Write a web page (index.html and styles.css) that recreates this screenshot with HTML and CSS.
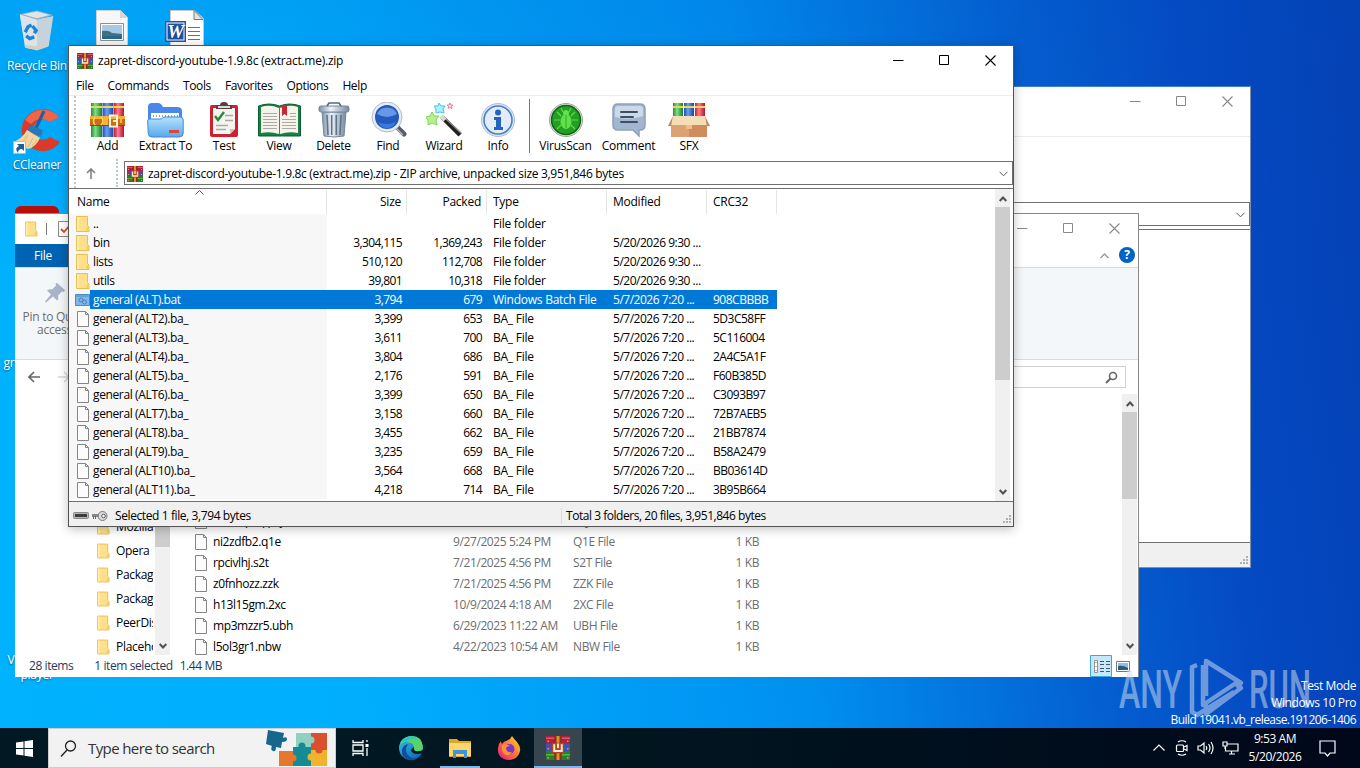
FILE: index.html
```
<!DOCTYPE html>
<html lang="en">
<head>
  <meta charset="UTF-8">
  <title>Desktop</title>
  <link rel="stylesheet" href="styles.css">
</head>
<body>
<svg class="defs">
  <defs>
    <linearGradient id="glass" x1="0" y1="0" x2="0" y2="1"><stop offset="0" stop-color="#b5e2fb"/><stop offset="1" stop-color="#58a9ec"/></linearGradient>
    <linearGradient id="steel" x1="0" y1="0" x2="1" y2="0"><stop offset="0" stop-color="#7c92a8"/><stop offset=".4" stop-color="#eef3f8"/><stop offset="1" stop-color="#7488a0"/></linearGradient>
    <linearGradient id="edge" x1="0" y1="0" x2="1" y2="1"><stop offset="0" stop-color="#35c1f1"/><stop offset="1" stop-color="#0c59a4"/></linearGradient>
    <linearGradient id="fire" x1="1" y1="0" x2="0" y2="1"><stop offset="0" stop-color="#ffe226"/><stop offset=".5" stop-color="#ff7139"/><stop offset="1" stop-color="#e31587"/></linearGradient>
    <linearGradient id="green" x1="0" y1="0" x2="1" y2="0"><stop offset="0" stop-color="#1f8f35"/><stop offset=".4" stop-color="#7be085"/><stop offset="1" stop-color="#1a7a2e"/></linearGradient>
    <linearGradient id="blue" x1="0" y1="0" x2="1" y2="0"><stop offset="0" stop-color="#1d4fb8"/><stop offset=".4" stop-color="#6c9df5"/><stop offset="1" stop-color="#1b439c"/></linearGradient>
    <linearGradient id="red" x1="0" y1="0" x2="1" y2="0"><stop offset="0" stop-color="#c01e3c"/><stop offset=".4" stop-color="#ff7c8b"/><stop offset="1" stop-color="#b0152f"/></linearGradient>
    <symbol id="rar" viewBox="0 0 16 16">
      <path fill="#b01f3c" d="M0 0h16v5H0z"/><path fill="#de5670" d="M0 1h16v1H0z"/>
      <path fill="#3a56b4" d="M0 5h16v5H0z"/><path fill="#6a3f9c" d="M0 6h16v1H0z"/>
      <path fill="#2b7f2c" d="M0 10h16v6H0z"/><path fill="#58b244" d="M0 12h16v1H0z"/>
      <path fill="#8a2f1a" d="M5.500 0h5v16h-5z"/><path fill="#e0912f" d="M7 0h2v16H7z"/>
      <path fill="#b9431f" d="M4 4.500h8v7H4z"/><path fill="none" stroke="#f7ead0" stroke-width="1.300" d="M5.500 5.500v4.500h5V5.500M8 5v3"/>
      <path fill="#d9a13a" d="M1 3h1v1H1zM14 3h1v1h-1zM1 8h1v1H1zM14 8h1v1h-1zM1 14h1v1H1zM14 14h1v1h-1z"/>
    </symbol>
    <symbol id="folder" viewBox="0 0 14 16">
      <path fill="#ffe08a" stroke="#e9c04f" d="M.5 .5h11v9l1.500 1.500v4.500H.5z"/><path fill="#ffebaa" d="M1 1h2v14H1z"/><path fill="#f4cf60" d="M10.500 11h2v4h-2z"/>
    </symbol>
    <symbol id="page" viewBox="0 0 12 16">
      <path fill="#fcfcfc" stroke="#858585" d="M.5 .5h8l3 3v12H.5z"/><path fill="none" stroke="#858585" d="M8.500 .5v3h3"/>
    </symbol>
    <symbol id="bat" viewBox="0 0 15 12">
      <path fill="#7fb8e8" stroke="#4a8cc8" d="M.5 .5h14v11H.5z"/><path fill="#65a3d8" d="M1 1h13v2H1z"/>
      <circle cx="6" cy="6" r="2" fill="none" stroke="#4f83b5"/><circle cx="9.500" cy="8" r="2" fill="none" stroke="#4f83b5"/>
    </symbol>
    <symbol id="up" viewBox="0 0 8 6"><path fill="none" stroke="#505050" stroke-width="2" d="M.7 5 4 1.500 7.300 5"/></symbol>
    <symbol id="down" viewBox="0 0 8 6"><path fill="none" stroke="#505050" stroke-width="2" d="M.7 1 4 4.500 7.300 1"/></symbol>
    <symbol id="min" viewBox="0 0 11 11"><path stroke="currentColor" d="M0 5.500h10.500"/></symbol>
    <symbol id="max" viewBox="0 0 11 11"><path fill="none" stroke="currentColor" d="M.5 .5h9v9h-9z"/></symbol>
    <symbol id="close" viewBox="0 0 11 11"><path stroke="currentColor" stroke-width="1.100" d="M.5 .5l10 10M10.500 .5l-10 10"/></symbol>
    <symbol id="grip" viewBox="0 0 9 9"><path fill="#b0b0b0" d="M6 0h2v2H6zM3 3h2v2H3zM6 3h2v2H6zM0 6h2v2H0zM3 6h2v2H3zM6 6h2v2H6z"/></symbol>
  </defs>
</svg>

<main class="desktop">
  <div class="shortcut recycle">
    <svg width="38" height="43" viewBox="0 0 42 44">
      <path fill="#c7d3dc" d="M2 4l6 37 13 2 13-4 5-33-20 4z"/><path fill="#dde4e9" d="M2 4l6 37 13 2V9z"/><path fill="#9eb0bd" d="M2 4l19-4 18 5-18 5z"/><path fill="#dfe6ea" d="M5 4l16-3 14 4-14 3.500z"/>
      <path fill="#d8cfc4" d="M7 38l14 1 13-2-1 3-12 4-13-3z"/>
      <g fill="none" stroke="#1d84d6" stroke-width="3.800"><path d="M8 24l3-6 4-2"/><path d="M16 17l4 5-2 3"/><path d="M18 29l-5 2-4-3"/></g>
    </svg>
    <span>Recycle Bin</span>
  </div>
  <div class="shortcut picture">
    <svg width="32" height="42" viewBox="0 0 32 42"><path fill="#f7f7f7" stroke="#d0d0d0" d="M.5 .5h24l7 7v34H.5z"/><path fill="#d5d5d5" d="M24 0v8h8z"/><path fill="#fff" stroke="#8a8f95" d="M4.500 13.500h23v17h-23z"/><path fill="#a8c9e6" d="M6 15h20v14H6z"/><path fill="#41717a" d="M6 21q7-1 10 2l10 1v2H6z"/><path fill="#2d668e" d="M6 26h20v3H6z"/></svg>
  </div>
  <div class="shortcut word">
    <svg width="39" height="42" viewBox="0 0 39 42"><path fill="#fff" stroke="#c9c9c9" d="M5.500 .5h24l9 8v34h-33z"/><path fill="#e4e4e4" stroke="#777" d="M29 .5v9h9z"/><path stroke="#3c78c3" d="M23 17.500h12M23 21.500h12M23 25.500h12M23 29.500h12"/><path fill="#1d55a8" d="M0 11h21v21H0z"/><path fill="#fff" d="M1.500 12.500h18v18h-18z"/><path fill="#1d55a8" d="M2.500 13.500h16v16h-16z"/><text x="10.500" y="28" class="word-letter">W</text></svg>
  </div>
  <div class="shortcut ccleaner">
    <svg width="48" height="46" viewBox="0 0 48 46">
      <path fill="#d93a2a" d="M46 9A21 21 0 1 0 47 34L37 29A10 10 0 1 1 37 14z"/><path fill="#f0644a" d="M46 9A21 21 0 0 0 12 12l6 4q9-9 19-2z"/>
      <path stroke="#1f5f9f" stroke-width="3" d="M31 3L23 20"/><path fill="#2c77b8" d="M17 17l13 5-2 7-14-6z"/><path fill="#f3d5a4" d="M14 22l13 8q-4 9-12 11L0 34q9-3 14-12z"/><path stroke="#dcb47a" d="M15 27L8 36M20 30l-5 9M24 32l-5 6"/>
      <path fill="#fff" stroke="#bbb" d="M.5 33.500h12v12H.5z"/><path fill="#235c98" d="M4 36h7v7l-2-2q-4 0-4 4-4-5 1-7z"/>
    </svg>
    <span>CCleaner</span>
  </div>
  <div class="red-app"></div>
  <div class="shortcut cut-gr"><span>gr</span></div>
  <div class="shortcut cut-vlc"><span>V</span></div>
  <div class="shortcut cut-player"><span>player</span></div>

  <section class="window winrar back">
    <div class="titlebar"><span class="title"></span>
      <div class="buttons"><svg><use href="#min"/></svg><svg><use href="#max"/></svg><svg><use href="#close"/></svg></div></div>
    <div class="menu"></div>
    <div class="toolbar"></div>
    <div class="address-row"><div class="address"><svg class="drop" viewBox="0 0 9 6"><path d="M.5 .8l4 4 4-4"/></svg></div></div>
    <div class="list">
      <div class="scrollbar"><svg><use href="#up"/></svg><div class="thumb"></div><svg class="end"><use href="#down"/></svg></div>
    </div>
    <div class="status"><svg class="grip"><use href="#grip"/></svg></div>
  </section>

  <section class="window explorer">
    <div class="titlebar">
      <svg class="small-folder"><use href="#folder"/></svg><i class="bar"></i>
      <svg width="16" height="16" viewBox="0 0 16 16"><path fill="#fff" stroke="#8a8a8a" d="M.5 .5h12v15H.5z"/><path fill="none" stroke="#c8511c" stroke-width="1.800" d="M3 8l3 3 6-7"/></svg>
      <div class="buttons"><svg><use href="#min"/></svg><svg><use href="#max"/></svg><svg><use href="#close"/></svg></div>
    </div>
    <div class="tabs"><span class="file-tab">File</span>
      <svg class="fold" viewBox="0 0 9 6"><path d="M.5 5l4-4 4 4"/></svg><b class="help">?</b></div>
    <div class="ribbon">
      <div class="pin">
        <svg width="22" height="22" viewBox="0 0 22 22"><path fill="#a9b3c9" d="M13 1l8 7-1 2-2-.5-4 4q1 4-1 5l-4-4-7 6-1-1 6-7-4-4q2-2 5-1l4-4-.500-2z"/></svg>
        <span>Pin to Quick<br>access</span>
      </div>
    </div>
    <div class="nav">
      <svg width="42" height="12" viewBox="0 0 42 12"><path fill="none" stroke="#666" stroke-width="1.600" d="M12 6H1M6 1L1 6l5 5"/><path fill="none" stroke="#d5d5d5" stroke-width="1.400" d="M30 6h11M36 1l5 5-5 5"/></svg>
      <div class="search"><svg width="13" height="13" viewBox="0 0 13 13"><circle cx="8" cy="5" r="3.500" fill="none" stroke="#666" stroke-width="1.600"/><path stroke="#666" stroke-width="2" d="M5.500 7.500L1 12"/></svg></div>
    </div>
    <div class="panes">
      <div class="tree" id="tree"></div>
      <div class="scrollbar tree-scroll"><div class="thumb"></div><svg class="end"><use href="#down"/></svg></div>
      <div class="files" id="files"></div>
      <div class="scrollbar files-scroll"><svg><use href="#up"/></svg><div class="thumb"></div><svg class="end"><use href="#down"/></svg></div>
    </div>
    <div class="explorer-status">
      <span>28 items</span><span>1 item selected</span><span>1.44 MB</span>
      <div class="views">
        <svg width="22" height="22" viewBox="0 0 22 22"><path fill="#c5e8fb" stroke="#3ea6dc" d="M.5 .5h21v21H.5z"/><path fill="#fff" stroke="#8e9a8e" d="M4.500 5.500h3v12h-3z"/><path stroke="#c95c43" stroke-dasharray="1 3" d="M6 7v10"/><path stroke="#456" d="M10 6.500h4M16 6.500h4M10 9.500h4M16 9.500h4M10 13.500h4M16 13.500h4M10 16.500h4M16 16.500h4"/></svg>
        <svg width="14" height="11" viewBox="0 0 14 11"><path fill="#fff" stroke="#777" d="M.5 .5h13v10H.5z"/><path fill="#8ebde8" d="M2 2h10v7H2z"/><path fill="#285c80" d="M2 5q5-1 10 2v2H2z"/></svg>
      </div>
    </div>
  </section>

  <section class="window winrar front">
    <div class="titlebar"><svg class="logo"><use href="#rar"/></svg><span class="title">zapret-discord-youtube-1.9.8c (extract.me).zip</span>
      <div class="buttons"><svg><use href="#min"/></svg><svg><use href="#max"/></svg><svg><use href="#close"/></svg></div></div>
    <div class="menu"><span>File</span><span>Commands</span><span>Tools</span><span>Favorites</span><span>Options</span><span>Help</span></div>
    <div class="toolbar">
      <div class="tool">
        <svg width="36" height="36" viewBox="0 0 36 36"><path fill="url(#green)" d="M1 1h11v34H1z"/><path fill="url(#blue)" d="M12.500 1h11v34h-11z"/><path fill="url(#red)" d="M24 1h10v34H24z"/><path fill="#ecd650" d="M1 4h11v2H1zM12.500 4h11v2h-11zM24 4h10v2H24z"/><path fill="#c96f10" d="M0 14h35v10H0z"/><path fill="#f2b13f" d="M0 14h35v3H0z"/><path fill="#8c470b" d="M0 23h35v1H0z"/><path fill="none" stroke="#ffd65d" stroke-width="1.500" d="M5 15q-3 4 0 8M11 15q4 4 0 8"/><path fill="#f5b53c" d="M13 15h5v8h-5z"/><path fill="none" stroke="#fff1cf" stroke-width="2" d="M27 13.500h-7v11h7zM23 19h5"/><path fill="#f5b53c" d="M30 17h2v4h-2z"/></svg>
        <span>Add</span>
      </div>
      <div class="tool">
        <svg width="37" height="36" viewBox="0 0 37 36"><path fill="#4a87e8" d="M1 5q0-4 4-4h6q3 0 5 4h14q5 0 5 4v19H1z"/><path fill="#fff" d="M4 11h28v10H4z"/><path stroke="#8aa2ba" stroke-width="2" stroke-dasharray="1 2" d="M6 14h25"/><path fill="url(#glass)" stroke="#3b89d9" d="M.7 19q0-2 2-2h10q2 0 3-1t3-1h15q2.500 0 2.500 3v13q0 4-4 4h-27q-4 0-4-4z"/><path fill="#dc453c" d="M22 28h10v3H22z"/></svg>
        <span>Extract To</span>
      </div>
      <div class="tool">
        <svg width="30" height="36" viewBox="0 0 30 36"><rect x="1" y="3" width="28" height="32" rx="2" fill="#ce2030"/><path fill="#f5f5ef" d="M4 6h22v21l-5 5H4z"/><path fill="#c7c7be" d="M26 27h-5v5z"/><path fill="#5a3d40" d="M7 3h4q0-3 4-3t4 3h4v4H7z"/><path fill="#ddd" d="M9 4h12v2H9z"/><path fill="none" stroke="#2d8a3c" stroke-width="2.500" d="M6 14l3 4 6-8"/><path stroke="#a9a9a9" stroke-width="1.500" d="M16 13.500h8M16 18.500h8M7 23.500h12M7 27.500h10"/></svg>
        <span>Test</span>
      </div>
      <div class="tool">
        <svg width="43" height="36" viewBox="0 0 43 36"><path fill="#178044" stroke="#0d5b30" d="M.5 4q11-4 21 0 10-4 21 0v30H.5z"/><path fill="#f6f3e9" d="M3 5q9-3 18 1v26q-9-3-18-1zM40 5q-9-3-18 1v26q9-3 18-1z"/><path stroke="#aaa" d="M5 11.500h14M5 14.500h14M5 17.500h14M5 20.500h14M5 23.500h14M5 26.500h14M24 17.500h14M24 20.500h14M24 23.500h14M24 26.500h14M32 11.500h6M32 14.500h6"/><path fill="#cf2434" d="M24 3h5v11l-2.500-2-2.500 2z"/><path stroke="#66746a" d="M21.500 5v27"/></svg>
        <span>View</span>
      </div>
      <div class="tool">
        <svg width="34" height="36" viewBox="0 0 34 36"><path fill="url(#steel)" stroke="#7286a0" d="M5 10h24l-2 24q-10 2-20 0z"/><path stroke="#5f7389" stroke-width="1.600" d="M10 13l1 20M14.700 13v20M19.300 13v20M24 13l-1 20"/><rect x="2" y="4" width="30" height="6" rx="2" fill="url(#steel)" stroke="#7286a0"/><path fill="none" stroke="#53687d" stroke-width="1.600" d="M10 4l2-3h10l2 3"/></svg>
        <span>Delete</span>
      </div>
      <div class="tool">
        <svg width="37" height="36" viewBox="0 0 37 36"><path stroke="#565b62" stroke-width="5" stroke-linecap="round" d="M27 25l7 7"/><path stroke="#aeb8c2" stroke-width="1.500" d="M25 25l8 8"/><circle cx="17" cy="15" r="15" fill="#e6edf4" stroke="#aebccb"/><circle cx="17" cy="15" r="12" fill="#2459bd"/><path fill="#6698e6" d="M7 12a11 11 0 0 1 20 0q-10 6-20 0z"/><path fill="#377bdc" d="M8 20q9 4 18 0-3 6-9 6t-9-6z"/></svg>
        <span>Find</span>
      </div>
      <div class="tool">
        <svg width="36" height="36" viewBox="0 0 36 36"><path stroke="#202020" stroke-width="4.500" d="M16 15l18 18"/><path stroke="#8c8c8c" stroke-width="1.500" d="M18 15l17 16"/><path stroke="#d8d8d8" stroke-width="4.500" d="M15 14l4 4"/><g stroke-linejoin="round"><path fill="#b7ef8a" stroke="#7fd95f" d="M6 10l2 4 5 0-3 4 1 5-5-2-4 2 0-5-3-3 5-1z"/><path fill="#aeefff" stroke="#45c8e7" d="M13 1l2 3h4l-2 3 1 4-4-1-4 1 0-4-2-3 4 0z"/><path fill="#ffd4dc" stroke="#e96b82" stroke-width=".8" d="M24 1l1 2h2l-1.500 1.500.5 2-2-1-2 1 .500-2L21 3h2z"/></g></svg>
        <span>Wizard</span>
      </div>
      <div class="tool">
        <svg width="36" height="36" viewBox="0 0 36 36"><circle cx="18" cy="18" r="16.500" fill="#dce6f4" stroke="#aebfda"/><circle cx="18" cy="18" r="14" fill="#e3edf9" stroke="#4a7fcb" stroke-width="1.600"/><circle cx="18" cy="10.500" r="3" fill="#2563c0"/><path fill="#2563c0" d="M14 15h7v10h2v3h-9v-3h2v-7h-2z"/></svg>
        <span>Info</span>
      </div>
      <i class="divider"></i>
      <div class="tool">
        <svg width="36" height="36" viewBox="0 0 36 36"><circle cx="18" cy="18" r="16.500" fill="#dfe5df" stroke="#9ca69c"/><circle cx="18" cy="18" r="14.500" fill="#23a023" stroke="#0e6411" stroke-width="1.500"/><g fill="none" stroke="#62d84c" stroke-width="1.200"><path d="M13 14L9 10M12 18H6M13 23l-4 4M23 14l4-4M24 18h6M23 23l4 4M15 10l-2-4M21 10l2-4"/></g><ellipse cx="18" cy="19.500" rx="5.500" ry="7.500" fill="#63df4a"/><circle cx="18" cy="11" r="3" fill="#63df4a"/><path stroke="#35a82c" d="M18 13v13"/></svg>
        <span>VirusScan</span>
      </div>
      <div class="tool">
        <svg width="34" height="36" viewBox="0 0 34 36"><path fill="#a3b6cf" stroke="#8da1bb" stroke-width="1.500" d="M6 2h22q5 0 5 5v16q0 5-5 5h-1v6l-6-6H6q-5 0-5-5V7q0-5 5-5z"/><path fill="#ccd9e8" d="M6 4h22q3 0 3 3v7q-14 5-28 1V7q0-3 3-3z"/><path stroke="#3f4e65" stroke-width="2" stroke-linecap="round" d="M9 10h16M9 15h12M9 20h16"/></svg>
        <span>Comment</span>
      </div>
      <div class="tool">
        <svg width="42" height="36" viewBox="0 0 42 36"><path fill="url(#green)" d="M5 1h10v15H5z"/><path fill="url(#blue)" d="M16 1h10v15H16z"/><path fill="url(#red)" d="M27 1h10v15H27z"/><path fill="#ecd650" d="M5 4h10v2H5zM16 4h10v2H16zM27 4h10v2H27z"/><path fill="#cf8d5d" d="M3 18h36v17H3z"/><path fill="#dda274" d="M3 18h18v17H3z"/><path fill="#f5ddb5" d="M5 14h32l3 9H2z"/><path fill="#c4854f" d="M5 14L0 24h3zM37 14l5 10h-3z"/><path fill="#eebd90" d="M18 23h6v4h-6z"/></svg>
        <span>SFX</span>
      </div>
    </div>
    <div class="address-row">
      <svg class="up-arrow" width="10" height="11" viewBox="0 0 10 11"><path fill="none" stroke="#808080" stroke-width="1.600" d="M5 11V1M1 5l4-4 4 4"/></svg>
      <i class="dots"></i>
      <div class="address"><svg class="logo"><use href="#rar"/></svg><span>zapret-discord-youtube-1.9.8c (extract.me).zip - ZIP archive, unpacked size 3,951,846 bytes</span>
        <svg class="drop" viewBox="0 0 9 6"><path d="M.5 .8l4 4 4-4"/></svg></div>
    </div>
    <div class="list">
      <div class="table">
        <div class="row head"><span>Name<svg class="sort" viewBox="0 0 9 5"><path d="M.5 4.500l4-4 4 4"/></svg></span><span>Size</span><span>Packed</span><span>Type</span><span>Modified</span><span>CRC32</span></div>
        <div id="archive"></div>
      </div>
      <div class="scrollbar"><svg><use href="#up"/></svg><div class="thumb"></div><svg class="end"><use href="#down"/></svg></div>
    </div>
    <div class="status">
      <svg width="36" height="12" viewBox="0 0 36 12"><rect x=".5" y="2.500" width="15" height="6" rx="1" fill="#b5b5b5" stroke="#888"/><path fill="#3c3c3c" d="M2 4h12v3H2z"/><circle cx="29.500" cy="6" r="4.500" fill="#ddd" stroke="#777"/><circle cx="30.500" cy="6" r="1.800" fill="#fff" stroke="#555"/><path stroke="#888" stroke-width="3" d="M19 5.500h7"/><path stroke="#666" d="M20.500 6v3M22.500 6v3"/></svg>
      <span class="selected-info">Selected 1 file, 3,794 bytes</span><span class="total-info">Total 3 folders, 20 files, 3,951,846 bytes</span>
      <svg class="grip"><use href="#grip"/></svg>
    </div>
  </section>

  <svg class="watermark" width="196" height="64" viewBox="0 0 196 64">
    <text x="0" y="53" textLength="63" lengthAdjust="spacingAndGlyphs">ANY</text>
    <text x="130" y="53" textLength="62" lengthAdjust="spacingAndGlyphs">RUN</text>
    <g fill="none" stroke-width="4.500" stroke-linejoin="round"><path d="M78 10l-5 2v45l5 3 37-23"/><path d="M87 41V6l35 22-5 4M87 49v10l35-26-5-5-33 22V10"/></g>
  </svg>
  <div class="build"><span>Test Mode</span><span>Windows 10 Pro</span><span class="build-no">Build 19041.vb_release.191206-1406</span></div>
</main>

<footer class="taskbar">
  <div class="start"><svg width="17" height="17" viewBox="0 0 17 17"><path fill="#fff" d="M0 2.500l7.500-1V8H0zM8.500 1.300L17 0v8H8.500zM0 9h7.500v6.500L0 14.500zM8.500 9H17v8l-8.500-1.300z"/></svg></div>
  <div class="task-search">
    <svg width="17" height="17" viewBox="0 0 17 17"><circle cx="10.500" cy="6" r="5" fill="none" stroke="#222" stroke-width="1.300"/><path stroke="#222" stroke-width="1.400" d="M7 10l-6 6.500"/></svg>
    <span>Type here to search</span>
    <svg class="puzzle" width="64" height="38" viewBox="0 0 64 38">
      <path fill="#8fd0c2" d="M30 4h15v14H30z"/><path fill="#d9502f" d="M45 4h16v17H45z"/><path fill="#e5782f" d="M13 22h15v15H13z"/><path fill="#158b93" d="M27 18h18v19H27z"/><path fill="#f2b32c" d="M45 21h16v16H45z"/>
      <circle cx="45" cy="11" r="3.500" fill="#8fd0c2"/><circle cx="53" cy="21" r="3.500" fill="#d9502f"/><circle cx="45" cy="28" r="3.500" fill="#f2b32c"/><circle cx="27" cy="29" r="3.500" fill="#e5782f"/><circle cx="36" cy="17" r="3.500" fill="#158b93"/>
      <path fill="#17678d" d="M2 1l16 3-1 5q4-2 4 1t-5 3l-1 6-5-1q0 5-3 4t-1-5l-6-2z"/>
    </svg>
  </div>
  <div class="app"><svg width="17" height="16" viewBox="0 0 17 16"><g fill="none" stroke="#fff" stroke-width="1.300"><path d="M1 0v2.500h10V0M1 5h10v6H1zM1 16v-2.500h10V16M15 0v2M15 8v8"/></g><path fill="#fff" d="M13.500 4h3v3h-3z"/></svg></div>
  <div class="app edge">
    <svg width="26" height="26" viewBox="0 0 26 26"><circle cx="13" cy="13" r="12" fill="url(#edge)"/><path fill="#56d36c" d="M9 2q14-4 16 10 0 6-8 5-3-1-1-4 0-6-8-6-4 0-6 3Q3 4 9 2z"/><path fill="#2bc3d2" d="M4 6q8-8 16-2-8-2-12 3z"/><path fill="#0f4f9b" d="M10 9q-5 8 2 13 5 3 9-1-3 5-9 4-9-2-8-10 1-5 6-6z"/><path fill="#021923" d="M16 12q-5 3-1 6 4 2 9 0 1-2 1-3-4 2-8 1-2-2-1-4z"/></svg>
  </div>
  <div class="app open"><svg width="22" height="20" viewBox="0 0 22 20"><path fill="#e4a526" d="M0 1h8l2 2h12v16H0z"/><path fill="#ffd667" d="M0 5h22v13H0z"/><path fill="#3b97db" d="M4 12h14v8h-3v-4H7v4H4z"/></svg></div>
  <div class="app firefox">
    <svg width="24" height="25" viewBox="0 0 24 25"><path fill="url(#fire)" d="M12 24C5 24 0 19 1 12q0-4 3-7 0 2 1 3 2-3 4-3Q13 4 15 0q2 3 5 6 4 5 3 9c-1 5-5 9-11 9z"/><circle cx="12.500" cy="13" r="5" fill="#7a35c9"/><path fill="#ff9332" d="M5 9q4-2 8 1-4 0-4 3 1 4 6 3-3 5-8 2-3-3-2-9z"/></svg>
  </div>
  <div class="app open current"><svg width="24" height="24"><use href="#rar"/></svg></div>
  <div class="tray">
    <svg class="more" width="12" height="8" viewBox="0 0 12 8"><path d="M.5 6.500L6 1l5.500 5.500"/></svg>
    <svg width="14" height="16" viewBox="0 0 14 16"><path d="M3 2q4-2.500 8 0M3 14q4 2.500 8 0"/><rect x="1.500" y="5" width="7" height="6.500" rx="1"/><path d="M9 7l3-1.500v5L9 9"/></svg>
    <svg width="17" height="14" viewBox="0 0 17 14"><path d="M1 5v4h2.500L7 12V2L3.500 5zM9 5q1.500 2 0 4M11.500 3q3 4 0 8M14 1q4 6 0 12"/></svg>
    <svg width="17" height="14" viewBox="0 0 17 14"><path d="M5 3h11v7H3.500V6M7 13h6M9.500 10v3M1 1h4v4H1zM3 5v3"/></svg>
    <div class="clock"><span>9:53 AM</span><span>5/20/2026</span></div>
    <svg class="note" width="17" height="17" viewBox="0 0 17 17"><path d="M1 1h15v12h-5l-2.500 3L6 13H1z"/></svg>
  </div>
</footer>

<script>
  const folders = [
    ['..', '', '', ''],
    ['bin', '3,304,115', '1,369,243', '5/20/2026 9:30 ...'],
    ['lists', '510,120', '112,708', '5/20/2026 9:30 ...'],
    ['utils', '39,801', '10,318', '5/20/2026 9:30 ...']
  ];
  const bats = [
    ['ALT2', '3,399', '653', '5D3C58FF'],
    ['ALT3', '3,611', '700', '5C116004'],
    ['ALT4', '3,804', '686', '2A4C5A1F'],
    ['ALT5', '2,176', '591', 'F60B385D'],
    ['ALT6', '3,399', '650', 'C3093B97'],
    ['ALT7', '3,158', '660', '72B7AEB5'],
    ['ALT8', '3,455', '662', '21BB7874'],
    ['ALT9', '3,235', '659', 'B58A2479'],
    ['ALT10', '3,564', '668', 'BB03614D'],
    ['ALT11', '4,218', '714', '3B95B664']
  ];

  function row(icon, name, size, packed, type, modified, crc, cls) {
    return `<div class="row ${cls || ''}">
      <span><svg class="ico-${icon}"><use href="#${icon}"/></svg><em>${name}</em></span>
      <span>${size}</span><span>${packed}</span><span>${type}</span><span>${modified}</span><span>${crc}</span>
    </div>`;
  }

  document.getElementById('archive').innerHTML =
    folders.map(f => row('folder', f[0], f[1], f[2], 'File folder', f[3], '')).join('') +
    row('bat', 'general (ALT).bat', '3,794', '679', 'Windows Batch File', '5/7/2026 7:20 ...', '908CBBBB', 'selected') +
    bats.map(b => row('page', `general (${b[0]}).ba_`, b[1], b[2], 'BA_ File', '5/7/2026 7:20 ...', b[3])).join('');

  document.getElementById('tree').innerHTML =
    ['Mozilla', 'Opera', 'Packages', 'Packages', 'PeerDistRepub', 'Placeholder'].map(n =>
      `<div class="node"><svg><use href="#folder"/></svg><span>${n}</span></div>`).join('');

  document.getElementById('files').innerHTML = [
    ['lb5mzpxq.pxj', '9/27/2025 5:24 PM', 'PXJ File'],
    ['ni2zdfb2.q1e', '9/27/2025 5:24 PM', 'Q1E File'],
    ['rpcivlhj.s2t', '7/21/2025 4:56 PM', 'S2T File'],
    ['z0fnhozz.zzk', '7/21/2025 4:56 PM', 'ZZK File'],
    ['h13l15gm.2xc', '10/9/2024 4:18 AM', '2XC File'],
    ['mp3mzzr5.ubh', '6/29/2023 11:22 AM', 'UBH File'],
    ['l5ol3gr1.nbw', '4/22/2023 10:54 AM', 'NBW File']
  ].map(f => `<div class="file"><svg><use href="#page"/></svg><span>${f[0]}</span><span>${f[1]}</span><span>${f[2]}</span><span>1 KB</span></div>`).join('');
</script>
</body>
</html>
```
FILE: styles.css
```
* {
  box-sizing: border-box;
}

body {
  margin: 0;
  width: 1360px;
  height: 768px;
  overflow: hidden;
  display: flex;
  flex-direction: column;
  font-family: "Open Sans", "Noto Sans", sans-serif;
  font-size: 12px;
  letter-spacing: -0.25px;
  line-height: 16px;
  color: #000;
  white-space: nowrap;
}

svg {
  display: block;
  flex: none;
}

.defs {
  position: absolute;
  width: 0;
  height: 0;
}

.desktop {
  position: relative;
  height: 728px;
  overflow: hidden;
  background:
    linear-gradient(180deg, rgba(0,80,190,0.14), rgba(0,80,190,0) 300px),
    linear-gradient(83deg, #00b2ff 0, #00aefe 25%, #0090f0 56%, #0462d2 75%, #0449c2 88%, #0440b4 100%);
}

/* desktop icons */
.shortcut {
  position: absolute;
  display: flex;
  flex-direction: column;
  align-items: center;
  width: 74px;
  color: #fff;
  text-shadow: 0 1px 2px rgba(0,0,0,0.5);
}

.recycle { left: 0; top: 9px; gap: 6px; }
.picture { left: 75px; top: 10px; }
.word { left: 147px; top: 10px; }
.ccleaner { left: 0; top: 108px; gap: 3px; }
.cut-gr { left: -28px; top: 355px; }
.cut-vlc { left: -26px; top: 652px; }
.cut-player { left: 0; top: 667px; }

.word-letter {
  font: italic bold 19px "Liberation Serif", serif;
  fill: #fff;
  text-anchor: middle;
}

.red-app {
  position: absolute;
  left: 15px;
  top: 206px;
  width: 44px;
  height: 30px;
  background: #b80f0a;
  border-radius: 6px;
}

/* windows */
.window {
  position: absolute;
  display: flex;
  flex-direction: column;
  background: #fff;
}

.winrar {
  width: 946px;
  height: 482px;
  border: 1px solid #555;
}

.front {
  left: 68px;
  top: 45px;
  box-shadow: 0 2px 10px rgba(0,0,0,0.25);
}

.back {
  left: 305px;
  top: 86px;
  border-color: #7f8fa8;
  border-top-color: #3f7fd0;
}

.titlebar {
  display: flex;
  align-items: center;
  height: 30px;
}

.winrar .titlebar {
  padding-left: 8px;
}

.logo {
  width: 16px;
  height: 16px;
}

.title {
  margin-left: 5px;
}

.buttons {
  display: flex;
  margin: 0 0 2px auto;
  padding-right: 17px;
  gap: 35px;
}

.explorer .buttons {
  padding-right: 18px;
}

.buttons svg {
  width: 11px;
  height: 11px;
}

.back .buttons,
.explorer .buttons {
  color: #888;
}

.menu {
  display: flex;
  height: 20px;
  padding: 2px 7px;
  gap: 14px;
  letter-spacing: -0.35px;
  border-bottom: 1px solid #ececec;
}

.toolbar {
  display: grid;
  grid-template-columns: 55px 61px 56px 54px 55px 54px 58px 50px 13px 59px 67px 54px;
  height: 62px;
  padding: 6px 0 0 4px;
  margin-left: 5px;
  border-left: 2px dotted #b5cfc0;
}

.back .toolbar {
  border: none;
}

.tool {
  display: flex;
  flex-direction: column;
  align-items: center;
}

.divider {
  width: 1px;
  height: 54px;
  margin: -3px 0 0 6px;
  background: #777;
}

.address-row {
  display: flex;
  align-items: center;
  height: 30px;
  padding-left: 5px;
}

.up-arrow {
  margin: 0 20px 0 10px;
}

.front .address-row {
  border-left: 2px dotted #b5cfc0;
  margin-left: 5px;
  padding-left: 0;
}

.dots {
  height: 28px;
  margin-right: 6px;
  border-left: 2px dotted #b5cfc0;
}

.address {
  display: flex;
  align-items: center;
  flex: 1;
  height: 24px;
  padding: 1px 4px 0 2px;
  border: 1px solid #707070;
  letter-spacing: -0.305px;
}

.address span {
  margin-left: 5px;
}

.drop {
  width: 9px;
  height: 6px;
  margin-left: auto;
}

.drop path,
.sort path,
.fold path {
  fill: none;
  stroke: #555;
}

.list {
  display: flex;
  justify-content: space-between;
  height: 314px;
  padding-right: 3px;
  overflow: hidden;
  border-top: 1px solid #707070;
  border-bottom: 1px solid #707070;
}

.table {
  padding-top: 1px;
}

.row {
  display: grid;
  grid-template-columns: 258px 80px 80px 120px 100px 70px;
  height: 19px;
  line-height: 19px;
}

.row > span {
  padding: 0 6px;
  overflow: hidden;
}

.row > span:nth-child(1) {
  display: flex;
  align-items: center;
  padding: 0 0 0 8px;
  background: #f7f7f7;
}

.row > span:nth-child(2),
.row > span:nth-child(3) {
  padding-right: 5px;
  text-align: right;
  letter-spacing: -0.6px;
}

.row > span:nth-child(5) {
  letter-spacing: -0.48px;
}

.row > span:nth-child(6) {
  letter-spacing: -0.5px;
}

.row.head {
  height: 24px;
  line-height: 24px;
}

.row.head > span {
  border-right: 1px solid #e5e5e5;
  letter-spacing: -0.25px;
}

.row.head > span:nth-child(1) {
  background: #fff;
  align-items: stretch;
}

.sort {
  width: 9px;
  height: 5px;
  margin: 0 0 0 85px;
}

.row em {
  font-style: normal;
  height: 19px;
  padding-left: 3px;
  flex: 1;
  letter-spacing: -0.37px;
}

.ico-folder,
.ico-page {
  width: 14px;
  height: 16px;
  margin-left: -1px;
}

.ico-bat {
  width: 15px;
  height: 12px;
  margin-left: -2px;
}

.selected {
  color: #fff;
}

.selected > span:nth-child(n+2),
.selected em {
  background: #0078d7;
}

.scrollbar {
  display: flex;
  flex-direction: column;
  align-items: center;
  width: 15px;
  background: #f0f0f0;
}

.scrollbar svg {
  width: 8px;
  height: 6px;
  margin: 7px 0 5px;
}

.scrollbar .end {
  margin: auto 0 6px;
}

.thumb {
  width: 15px;
  height: 173px;
  background: #cdcdcd;
}

.status {
  display: flex;
  align-items: center;
  flex: 1;
  padding: 4px 0 0 4px;
  background: #f0f0f0;
}

.selected-info {
  width: 452px;
  margin-left: 1px;
  padding-left: 5px;
  border-right: 1px solid #dcdcdc;
  letter-spacing: -0.4px;
}

.total-info {
  padding-left: 4px;
  letter-spacing: -0.46px;
}

.grip {
  width: 9px;
  height: 9px;
  margin: 7px 1px 0 auto;
}

/* explorer */
.explorer {
  left: 15px;
  top: 213px;
  width: 1124px;
  height: 464px;
  border-top: 1px solid #888;
  border-right: 1px solid #888;
}

.explorer .titlebar {
  padding-left: 10px;
}

.small-folder {
  width: 13px;
  height: 16px;
}

.bar {
  width: 1px;
  height: 12px;
  margin: 0 11px 0 8px;
  background: #777;
}

.tabs {
  display: flex;
  align-items: center;
  height: 23px;
}

.file-tab {
  width: 56px;
  height: 23px;
  line-height: 23px;
  text-align: center;
  color: #fff;
  background: #0063b1;
}

.fold {
  width: 9px;
  height: 6px;
  margin-left: auto;
}

.fold path {
  stroke: #999;
  stroke-width: 1.4;
}

.help {
  width: 16px;
  height: 16px;
  margin: 0 3px 1px 10px;
  border-radius: 50%;
  background: #0063c6;
  color: #fff;
  text-align: center;
}

.ribbon {
  height: 93px;
  padding: 14px 0 0 3px;
  background: #f4f7fa;
  border-top: 1px solid #dadbdc;
  border-bottom: 1px solid #dadbdc;
}

.pin {
  display: flex;
  flex-direction: column;
  align-items: center;
  width: 73px;
  gap: 6px;
  text-align: center;
  line-height: 13px;
  color: #6d6d6d;
}

.nav {
  display: flex;
  align-items: center;
  height: 34px;
  padding: 0 12px 0 13px;
}

.search {
  display: flex;
  align-items: center;
  justify-content: flex-end;
  width: 160px;
  height: 22px;
  margin-left: auto;
  padding-right: 7px;
  border: 1px solid #d0d0d0;
}

.panes {
  display: flex;
  height: 261px;
  padding-right: 1px;
  overflow: hidden;
}

.tree {
  display: flex;
  flex-direction: column;
  justify-content: flex-end;
  width: 140px;
  padding-left: 82px;
  overflow: hidden;
}

.node {
  display: flex;
  align-items: center;
  flex: none;
  height: 24px;
  gap: 6px;
}

.node:last-child {
  margin-bottom: -4px;
}

.node svg {
  width: 13px;
  height: 16px;
}

.node span {
  width: 37px;
  overflow: hidden;
  letter-spacing: -0.3px;
}

.tree-scroll .thumb {
  height: 153px;
}

.files {
  display: flex;
  flex-direction: column;
  justify-content: flex-end;
  flex: 1;
  padding-left: 25px;
}

.file {
  display: grid;
  grid-template-columns: 18px 240px 120px 120px 66px;
  align-items: center;
  flex: none;
  height: 21px;
}

.file:last-child {
  margin-bottom: -2px;
}

.file svg {
  width: 12px;
  height: 16px;
}

.file span {
  letter-spacing: -0.4px;
}

.file span:nth-child(n+3) {
  color: #6d6d6d;
}

.file span:last-child {
  text-align: right;
}

.files-scroll .thumb {
  height: 87px;
}

.explorer-status {
  display: flex;
  align-items: center;
  height: 22px;
  padding: 0 8px 0 14px;
  letter-spacing: -0.42px;
  color: #1e395b;
}

.explorer-status span:nth-child(2) {
  margin: 0 7px 0 21px;
}

.views {
  display: flex;
  align-items: center;
  margin-left: auto;
  gap: 4px;
}

/* corner texts */
.watermark {
  position: absolute;
  left: 1119px;
  top: 655px;
  opacity: 0.5;
}

.watermark text {
  font: 500 53px Roboto, sans-serif;
  letter-spacing: 0;
  fill: #d8e2f2;
}

.watermark g {
  stroke: #d8e2f2;
}

.build {
  position: absolute;
  right: 4px;
  top: 677px;
  display: flex;
  flex-direction: column;
  align-items: flex-end;
  line-height: 17px;
  letter-spacing: -0.4px;
  color: #fff;
}

.build-no {
  letter-spacing: -0.54px;
}

/* taskbar */
.taskbar {
  display: flex;
  height: 40px;
  background: linear-gradient(90deg, #021923, #011620 600px, #00081a 1360px);
  color: #fff;
}

.start,
.app {
  display: flex;
  align-items: center;
  justify-content: center;
  width: 48px;
}

.task-search {
  display: flex;
  align-items: center;
  width: 288px;
  padding: 0 5px 0 11px;
  background: #f2f2f2;
  border: 1px solid #cfcfcf;
  color: #333;
  font-size: 15px;
  letter-spacing: -0.6px;
}

.task-search span {
  margin-left: 11px;
}

.puzzle {
  margin-left: auto;
}

.app {
  margin-right: 1px;
}

.edge {
  margin-left: 2px;
}

.open {
  border-bottom: 2px solid #76b9ed;
  padding-top: 2px;
}

.app.open:not(.current) {
  width: 40px;
  margin: 0 5px 0 4px;
}

.current {
  background: #36454e;
}

.tray {
  display: flex;
  align-items: center;
  margin-left: auto;
  gap: 8px;
  padding-right: 24px;
}

.more {
  margin-right: 2px;
}

.tray svg path,
.tray svg rect {
  fill: none;
  stroke: #fff;
  stroke-width: 1.2;
}

.clock {
  display: flex;
  flex-direction: column;
  align-items: center;
  width: 56px;
  line-height: 18px;
  letter-spacing: -0.45px;
}

.note {
  margin-left: 8px;
}
```
